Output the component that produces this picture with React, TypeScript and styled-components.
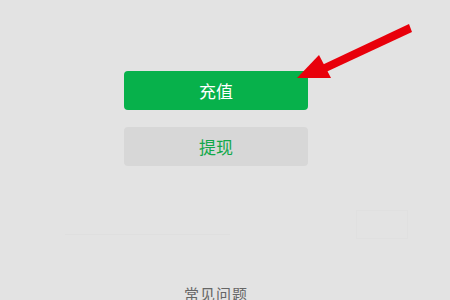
import { createGlobalStyle, styled } from "styled-components";

const GlobalStyle = createGlobalStyle`
  html, body {
    margin: 0;
    padding: 0;
    background: #e3e3e3;
    font-family: "Noto Sans CJK SC", "Noto Sans", sans-serif;
  }
`;

const App = () => {
  return (
    <Page>
      <GlobalStyle />
      <Actions>
        <Button $primary>充值</Button>
        <Button>提现</Button>
      </Actions>
      <Ghost>
        <GhostLine />
        <GhostBox />
      </Ghost>
      <Footer>常见问题</Footer>
      <Arrow width="450" height="300" viewBox="0 0 450 300">
        <polygon points="409,24 412,32 326,72 322,65" fill="#e8000b" />
        <polygon points="297,78 319,55 331,78" fill="#e8000b" />
      </Arrow>
    </Page>
  );
};

export default App;

const Page = styled.div`
  position: relative;
  width: 450px;
  height: 300px;
  overflow: hidden;
  display: flex;
  flex-direction: column;
  align-items: center;
  padding: 71px 18px 0 0;
  box-sizing: border-box;

  & > * {
    flex-shrink: 0;
  }
`;

const Actions = styled.div`
  display: flex;
  flex-direction: column;
  gap: 17px;
`;

const Button = styled.div<{ $primary?: boolean }>`
  width: 184px;
  height: 39px;
  border-radius: 4px;
  display: flex;
  align-items: center;
  justify-content: center;
  font-size: 17px;
  background: ${(p) => (p.$primary ? "#07b14b" : "#d7d7d7")};
  color: ${(p) => (p.$primary ? "#ffffff" : "#12a84a")};
`;

const Ghost = styled.div`
  width: 450px;
  height: 100px;
  display: flex;
  align-items: flex-start;
  justify-content: space-between;
  padding: 44px 42px 0 65px;
  box-sizing: border-box;
  margin-right: -18px;
`;

const GhostLine = styled.div`
  width: 165px;
  height: 1px;
  margin-top: 24px;
  background: #dfdfdf;
`;

const GhostBox = styled.div`
  width: 50px;
  height: 27px;
  border: 1px solid #e0e0e0;
`;

const Footer = styled.div`
  margin-top: 17px;
  font-size: 15px;
  color: #666666;
  letter-spacing: 1px;
`;

const Arrow = styled.svg`
  position: absolute;
  left: 0;
  top: 0;
  pointer-events: none;
`;
